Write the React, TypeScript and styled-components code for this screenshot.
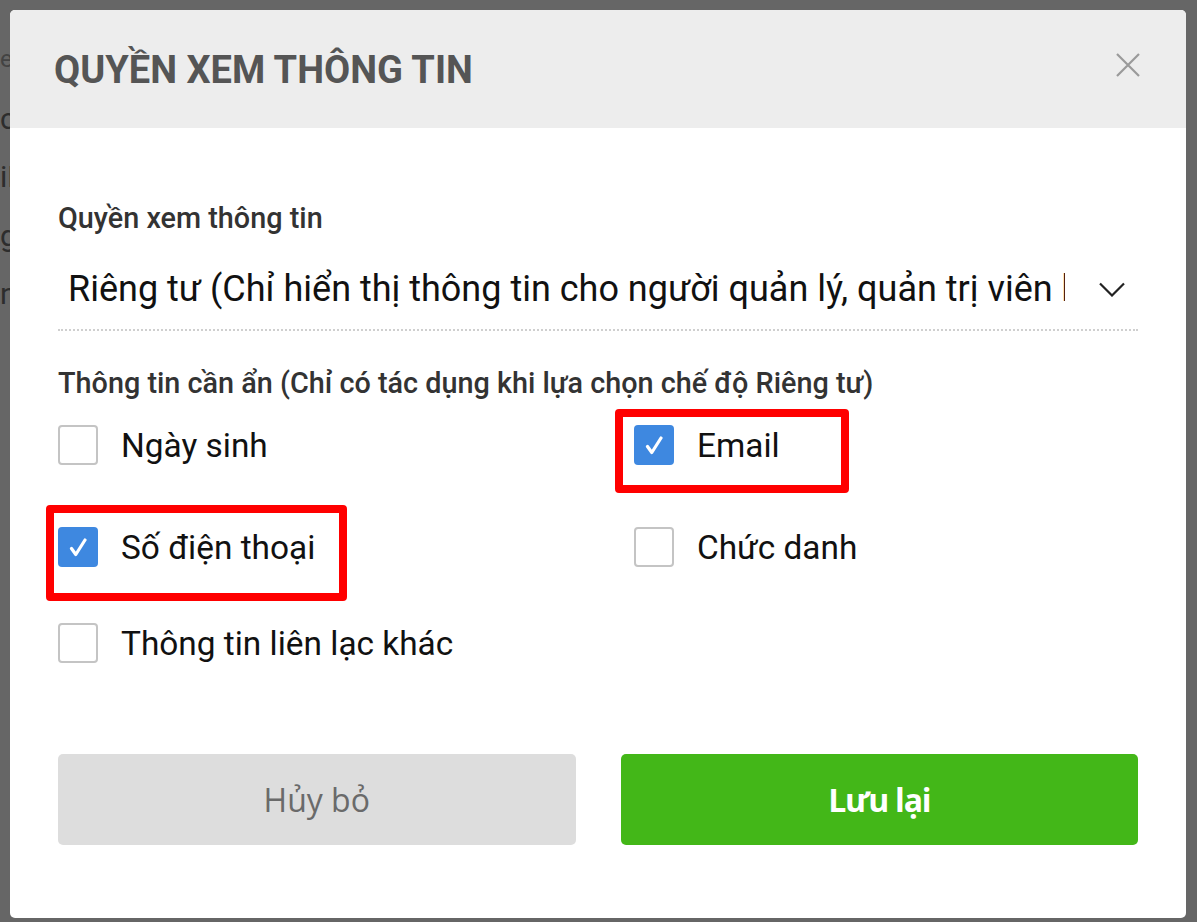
import React from "react";
import styled, { createGlobalStyle } from "styled-components";

const GlobalStyle = createGlobalStyle`
  html, body { margin: 0; padding: 0; }
  body {
    width: 1197px;
    height: 922px;
    overflow: hidden;
    font-family: Roboto, "Noto Sans", sans-serif;
    background: #ffffff;
  }
  * { box-sizing: border-box; }
`;

const Page = styled.div`
  position: relative;
  width: 1197px;
  height: 922px;
  overflow: hidden;
`;

const BackgroundPage = styled.div`
  display: flex;
  flex-direction: column;
  padding: 44px 0 0 0;
  font-family: Roboto, sans-serif;
`;

const BgLine = styled.div<{ $faint?: boolean; $h: number }>`
  font-size: ${(p) => (p.$faint ? 24 : 30)}px;
  height: ${(p) => p.$h}px;
  line-height: 30px;
  color: ${(p) => (p.$faint ? "#a8a8a8" : "#707070")};
  white-space: nowrap;
`;

const Backdrop = styled.div`
  position: absolute;
  inset: 0;
  background: rgba(0, 0, 0, 0.6);
  padding: 10px 11px 4px 10px;
  display: flex;
`;

const Modal = styled.div`
  flex: 1;
  background: #ffffff;
  border-radius: 5px;
  overflow: hidden;
  display: flex;
  flex-direction: column;
`;

const Header = styled.div`
  height: 118px;
  background: #ededed;
  display: flex;
  align-items: center;
  justify-content: space-between;
  padding: 1px 46px 0 44px;
`;

const Title = styled.h2`
  margin: 0;
  font-family: Roboto, sans-serif;
  font-weight: 700;
  font-size: 38px;
  color: #555555;
`;

const CloseButton = styled.button`
  border: none;
  background: transparent;
  padding: 0;
  margin-bottom: 9px;
  width: 24px;
  height: 24px;
  display: flex;
  align-items: center;
  justify-content: center;
  cursor: pointer;
`;

const Body = styled.div`
  padding: 73px 48px 0 48px;
  display: flex;
  flex-direction: column;
`;

const FieldLabel = styled.div`
  font-family: Roboto, sans-serif;
  font-weight: 500;
  font-size: 28.8px;
  line-height: 34px;
  color: #333333;
`;

const Select = styled.div`
  margin-top: 33px;
  display: flex;
  align-items: center;
  border-bottom: 2px dotted #cfcfcf;
  padding: 0 13px 19px 10px;
`;

const SelectValue = styled.div`
  flex: 0 0 997px;
  overflow: hidden;
  white-space: nowrap;
  font-family: Roboto, sans-serif;
  font-size: 36px;
  line-height: 42px;
  color: #111111;
`;

const Chevron = styled.div`
  margin-left: auto;
  display: flex;
  align-items: center;
`;

const SectionLabel = styled(FieldLabel)`
  margin-top: 35px;
`;

const Options = styled.div`
  margin-top: 25px;
  display: grid;
  grid-template-columns: 576px 1fr;
  grid-template-rows: 102px 96px 40px;
`;

const Option = styled.label`
  position: relative;
  display: flex;
  align-items: center;
  gap: 23px;
  height: 40px;
  font-family: Roboto, sans-serif;
  font-size: 33.4px;
  color: #111111;
  white-space: nowrap;
  cursor: pointer;
`;

const Box = styled.span<{ $checked: boolean }>`
  width: 40px;
  height: 40px;
  border-radius: 4px;
  flex: 0 0 40px;
  display: flex;
  align-items: center;
  justify-content: center;
  border: ${(p) => (p.$checked ? "none" : "2px solid #c4c4c4")};
  background: ${(p) => (p.$checked ? "#3e88e0" : "#ffffff")};
`;

const Highlight = styled.span<{ $l: number; $t: number; $w: number; $h: number }>`
  position: absolute;
  left: ${(p) => p.$l}px;
  top: ${(p) => p.$t}px;
  width: ${(p) => p.$w}px;
  height: ${(p) => p.$h}px;
  border: 8px solid #ff0000;
  border-radius: 4px;
  pointer-events: none;
`;

const Footer = styled.div`
  margin-top: 91px;
  display: grid;
  grid-template-columns: 1fr 1fr;
  gap: 45px;
`;

const Button = styled.button<{ $primary?: boolean }>`
  height: 91px;
  border: none;
  border-radius: 5px;
  font-family: "Open Sans", sans-serif;
  font-size: 32px;
  font-weight: ${(p) => (p.$primary ? 700 : 400)};
  letter-spacing: ${(p) => (p.$primary ? "-1.2px" : "0")};
  color: ${(p) => (p.$primary ? "#ffffff" : "#6a6a6a")};
  background: ${(p) => (p.$primary ? "#43b718" : "#dddddd")};
  cursor: pointer;
`;

const Check = () => (
  <svg width="18" height="19" viewBox="0 0 18 19">
    <path d="M2.5 10.5 L6.8 16.5 L16 2" fill="none" stroke="#ffffff" strokeWidth="3.2" strokeLinecap="round" strokeLinejoin="round" />
  </svg>
);

type Opt = {
  label: string;
  checked: boolean;
  hl?: { l: number; t: number; w: number; h: number };
};

const options: Opt[] = [
  { label: "Ngày sinh", checked: false },
  { label: "Email", checked: true, hl: { l: -19, t: -16, w: 234, h: 84 } },
  { label: "Số điện thoại", checked: true, hl: { l: -12, t: -22, w: 301, h: 96 } },
  { label: "Chức danh", checked: false },
  { label: "Thông tin liên lạc khác", checked: false },
];

export default function App() {
  return (
    <Page>
      <GlobalStyle />
      <BackgroundPage>
        <BgLine $faint $h={60}>esports</BgLine>
        <BgLine $h={58}>công ty</BgLine>
        <BgLine $h={59}>iPhone</BgLine>
        <BgLine $h={58}>giới tính</BgLine>
        <BgLine $h={58}>nhân viên</BgLine>
      </BackgroundPage>
      <Backdrop>
        <Modal>
          <Header>
            <Title>QUYỀN XEM THÔNG TIN</Title>
            <CloseButton aria-label="Đóng">
              <svg width="24" height="24" viewBox="0 0 24 24">
                <path d="M1 1 L23 23 M23 1 L1 23" stroke="#9a9a9a" strokeWidth="2.2" fill="none" />
              </svg>
            </CloseButton>
          </Header>
          <Body>
            <FieldLabel>Quyền xem thông tin</FieldLabel>
            <Select>
              <SelectValue>
                Riêng tư (Chỉ hiển thị thông tin cho người quản lý, quản trị viên hệ thống)
              </SelectValue>
              <Chevron>
                <svg width="26" height="15" viewBox="0 0 26 15">
                  <path d="M1 1.5 L13 13.5 L25 1.5" fill="none" stroke="#222222" strokeWidth="2.2" />
                </svg>
              </Chevron>
            </Select>
            <SectionLabel>Thông tin cần ẩn (Chỉ có tác dụng khi lựa chọn chế độ Riêng tư)</SectionLabel>
            <Options>
              {options.map((o) => (
                <Option key={o.label}>
                  <Box $checked={o.checked}>{o.checked && <Check />}</Box>
                  {o.label}
                  {o.hl && <Highlight $l={o.hl.l} $t={o.hl.t} $w={o.hl.w} $h={o.hl.h} />}
                </Option>
              ))}
            </Options>
            <Footer>
              <Button>Hủy bỏ</Button>
              <Button $primary>Lưu lại</Button>
            </Footer>
          </Body>
        </Modal>
      </Backdrop>
    </Page>
  );
}
